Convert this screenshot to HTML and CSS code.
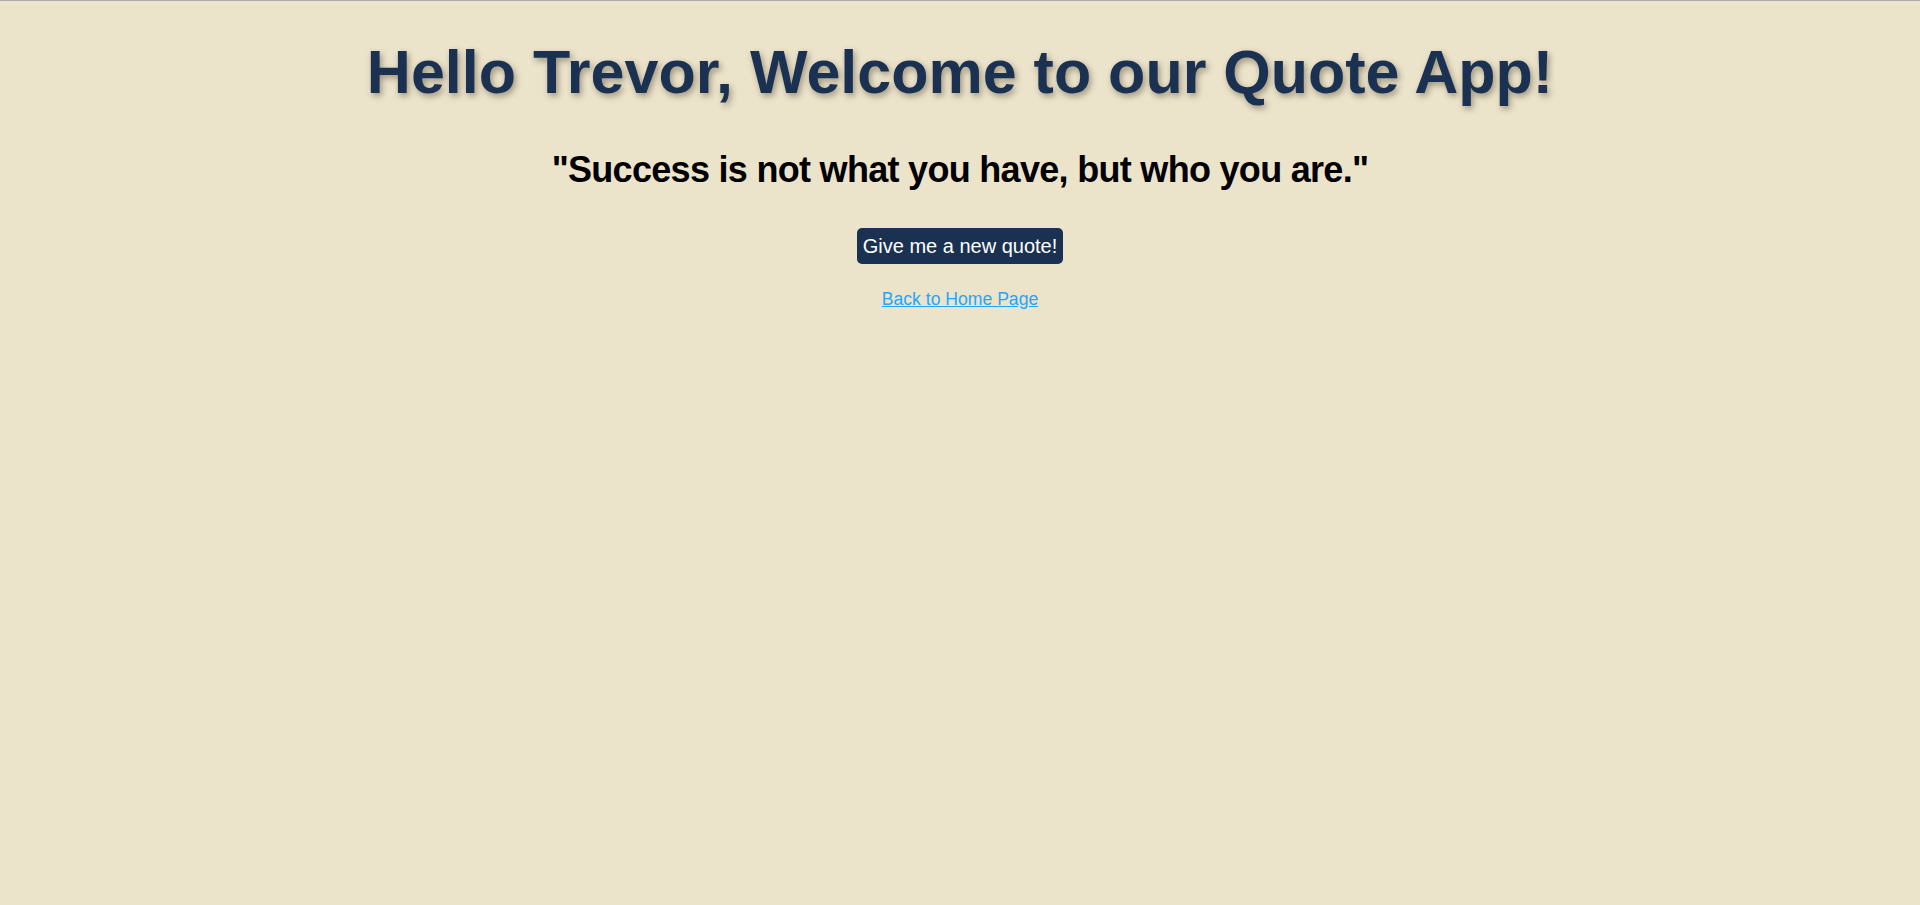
FILE: index.html
```html
<!DOCTYPE html>
<html lang="en">
<head>
<meta charset="utf-8">
<title>Quote App</title>
<link rel="stylesheet" href="styles.css">
</head>
<body>
<main class="page">
  <h1 class="title">Hello Trevor, Welcome to our Quote App!</h1>
  <p class="quote">"Success is not what you have, but who you are."</p>
  <button class="new-quote" type="button">Give me a new quote!</button>
  <a class="home-link" href="#">Back to Home Page</a>
</main>
</body>
</html>
```

FILE: styles.css
```css
html, body {
  margin: 0;
  padding: 0;
  height: 100%;
}
body {
  background: #ece3cb;
  border-top: 1px solid #a7a9ab;
  box-sizing: border-box;
  font-family: "Liberation Sans", Arial, sans-serif;
}
.page {
  display: flex;
  flex-direction: column;
  align-items: center;
  text-align: center;
}
.title {
  margin: 36px 0 0;
  font-size: 61px;
  font-weight: bold;
  color: #1b3151;
  text-shadow: 2px 3px 6px rgba(60, 50, 30, 0.45);
}
.quote {
  margin: 42px 0 0;
  font-size: 36px;
  letter-spacing: -0.7px;
  font-weight: bold;
  color: #000;
}
.new-quote {
  margin-top: 37px;
  padding: 6px 6px;
  font-family: "Liberation Sans", Arial, sans-serif;
  font-size: 20px;
  line-height: 24px;
  color: #fff;
  background: #1b3151;
  border: none;
  border-radius: 5px;
}
.home-link {
  margin-top: 25px;
  font-size: 17.6px;
  color: #1ea7fd;
}
```
